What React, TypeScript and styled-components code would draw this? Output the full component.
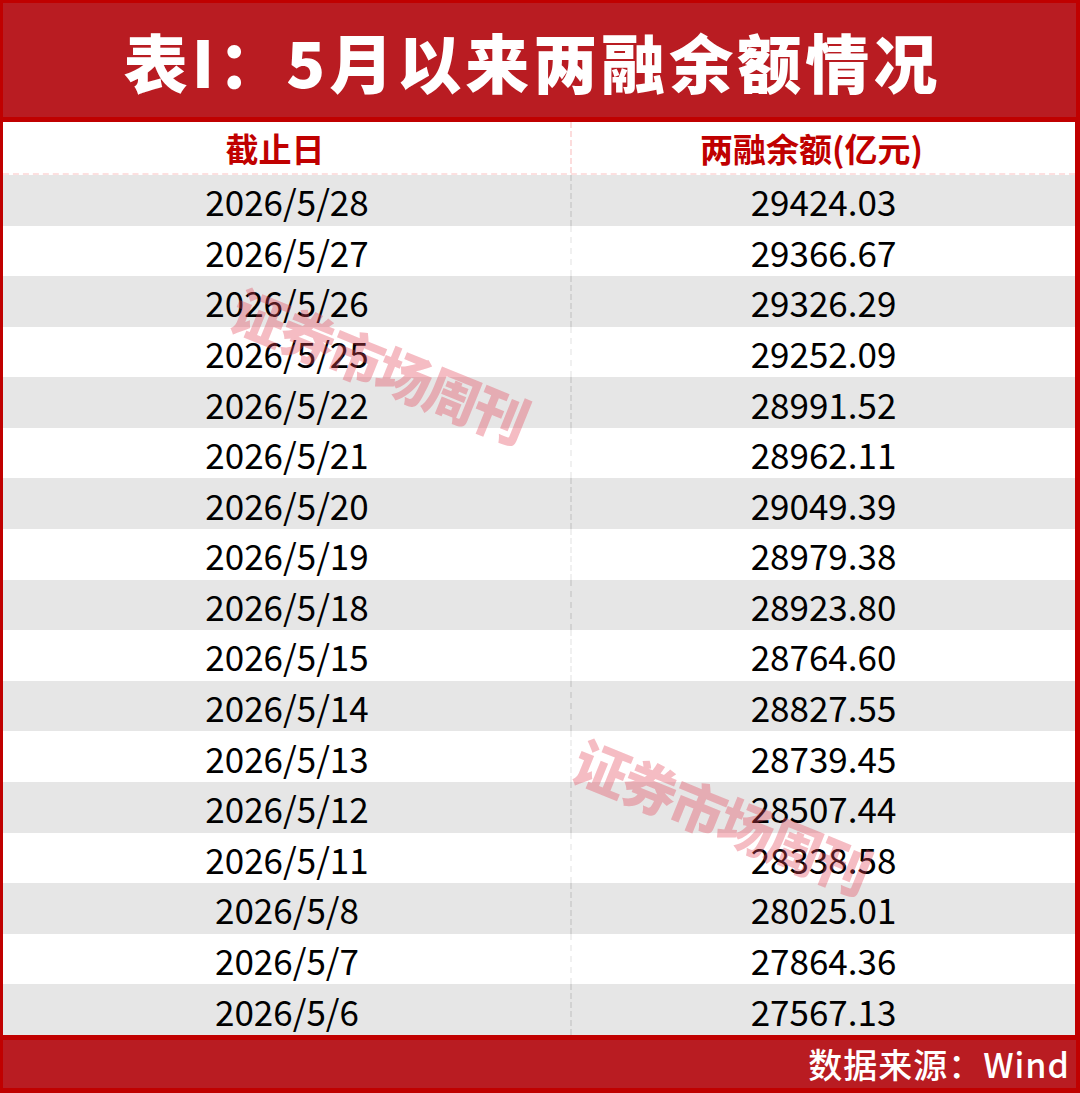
import React from "react";
import styled, { createGlobalStyle } from "styled-components";

const Global = createGlobalStyle`
  html, body { margin: 0; padding: 0; background: #ffffff; }
  body { font-family: "Noto Sans CJK SC", "Noto Sans", sans-serif; }
`;

const Frame = styled.div`
  position: relative;
  width: 1080px;
  height: 1093px;
  display: flex;
  flex-direction: column;
  overflow: hidden;
  box-sizing: border-box;
`;

const TitleBar = styled.div`
  height: 122px;
  box-sizing: border-box;
  background: #b91c22;
  border-top: 3px solid #c00000;
  border-bottom: 5px solid #c00000;
  border-left: 3px solid #c00000;
  border-right: 4px solid #c00000;
  display: flex;
  align-items: center;
  justify-content: center;
`;

const Title = styled.h1`
  margin: 0;
  color: #ffffff;
  font-family: "Noto Sans CJK SC", sans-serif;
  font-weight: 900;
  font-size: 64px;
  line-height: 1;
  letter-spacing: 4px;
  padding-right: 14px;
`;

const Body = styled.div`
  flex: 1;
  display: flex;
  flex-direction: column;
  border-left: 3px solid #c00000;
  border-right: 5px solid #c00000;
  box-shadow: inset -1px 0 0 #bdbdbd;
`;

const Row = styled.div<{ $bg: string; $h: number; $line: string }>`
  display: grid;
  grid-template-columns: 568px 1fr;
  height: ${(p) => p.$h}px;
  background: ${(p) => p.$bg};
  --line: ${(p) => p.$line};
`;

const Cell = styled.div<{ $divider?: boolean; $head?: boolean }>`
  display: flex;
  align-items: center;
  justify-content: center;
  font-family: "Noto Sans CJK SC", "Noto Sans", sans-serif;
  font-size: ${(p) => (p.$head ? "33px" : "35px")};
  font-weight: ${(p) => (p.$head ? 700 : 400)};
  color: ${(p) => (p.$head ? "#c00000" : "#000000")};
  line-height: 1;
  border-left: ${(p) => (p.$divider ? "2px dashed var(--line)" : "none")};
  margin-left: ${(p) => (p.$divider ? "-1px" : "0")};
  padding-top: 1px;
  padding-right: ${(p) => (p.$head ? "24px" : "0")};
`;

const HeaderRow = styled(Row)`
  border-bottom: 2px dashed #fde0e0;
  box-sizing: border-box;
`;

const Footer = styled.div`
  height: 58px;
  box-sizing: border-box;
  background: #b91c22;
  border-top: 5px solid #c00000;
  border-bottom: 5px solid #c00000;
  border-left: 3px solid #c00000;
  border-right: 4px solid #c00000;
  display: flex;
  align-items: center;
  justify-content: flex-end;
  padding-right: 6px;
`;

const Source = styled.div`
  color: #ffffff;
  font-family: "Noto Sans CJK SC", "Noto Sans", sans-serif;
  font-weight: 500;
  font-size: 34px;
  line-height: 1;
  letter-spacing: 1px;
`;

const Watermark = styled.div<{ $x: number; $y: number }>`
  position: absolute;
  left: ${(p) => p.$x}px;
  top: ${(p) => p.$y}px;
  transform: translate(-50%, -50%) rotate(22deg);
  color: rgba(226, 70, 90, 0.36);
  font-family: "Noto Sans CJK SC", serif;
  font-weight: 900;
  font-size: 55px;
  letter-spacing: -3px;
  white-space: nowrap;
  pointer-events: none;
  line-height: 1;
`;

const rows: [string, string][] = [
  ["2026/5/28", "29424.03"],
  ["2026/5/27", "29366.67"],
  ["2026/5/26", "29326.29"],
  ["2026/5/25", "29252.09"],
  ["2026/5/22", "28991.52"],
  ["2026/5/21", "28962.11"],
  ["2026/5/20", "29049.39"],
  ["2026/5/19", "28979.38"],
  ["2026/5/18", "28923.80"],
  ["2026/5/15", "28764.60"],
  ["2026/5/14", "28827.55"],
  ["2026/5/13", "28739.45"],
  ["2026/5/12", "28507.44"],
  ["2026/5/11", "28338.58"],
  ["2026/5/8", "28025.01"],
  ["2026/5/7", "27864.36"],
  ["2026/5/6", "27567.13"],
];

export default function App() {
  return (
    <>
      <Global />
      <Frame>
        <TitleBar>
          <Title>表I：5月以来两融余额情况</Title>
        </TitleBar>
        <Body>
          <HeaderRow $bg="#ffffff" $h={53} $line="#fcdcdc">
            <Cell $head>截止日</Cell>
            <Cell $head $divider>
              两融余额(亿元)
            </Cell>
          </HeaderRow>
          {rows.map(([d, v], i) => (
            <Row
              key={d}
              $bg={i % 2 === 0 ? "#e6e6e6" : "#ffffff"}
              $h={50.59}
              $line={i % 2 === 0 ? "#d2d2d2" : "#f0f0f0"}
            >
              <Cell>{d}</Cell>
              <Cell $divider>{v}</Cell>
            </Row>
          ))}
        </Body>
        <Footer>
          <Source>数据来源：Wind</Source>
        </Footer>
        <Watermark $x={380} $y={364}>证券市场周刊</Watermark>
        <Watermark $x={722} $y={815}>证券市场周刊</Watermark>
      </Frame>
    </>
  );
}
